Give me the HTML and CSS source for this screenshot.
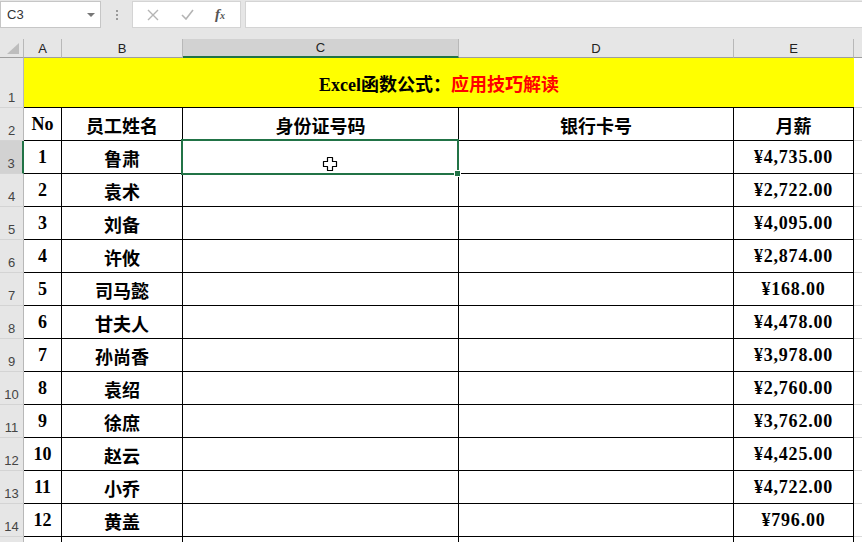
FILE: index.html
```html
<!DOCTYPE html>
<html>
<head>
<meta charset='utf-8'>
<title>Excel函数公式</title>
<link rel="stylesheet" href="styles.css">
</head>
<body>

<div class=topbar>
	<div class=namebox><span>C3</span><span class=drop></span></div>
	<div class=grip><i></i><i></i><i></i></div>
	<div class=fbtns>
		<svg class=btn width=12 height=12 viewBox="0 0 12 12"><path d="M1 1 L11 11 M11 1 L1 11" stroke="#b4b4b4" stroke-width="1.4" fill="none"/></svg>
		<svg class=btn width=13 height=11 viewBox="0 0 13 11"><path d="M1 6 L5 10 L12 1" stroke="#b4b4b4" stroke-width="1.6" fill="none"/></svg>
		<span class=fx>f<small>x</small></span>
	</div>
	<div class=finput></div>
</div>

<div class=sheet>
	<!-- column headers -->
	<div class="ch corner"><svg width=13 height=12 viewBox="0 0 13 12"><polygon points="12,0 12,11 0,11" fill="#bdbdbd"/></svg></div>
	<div class=ch>A</div>
	<div class=ch>B</div>
	<div class="ch sel">C</div>
	<div class=ch>D</div>
	<div class=ch>E</div>
	<div class="ch last"></div>

	<!-- row 1 -->
	<div class=rh>1</div>
	<div class=title>Excel函数公式：<span class=red>应用技巧解读</span></div>
	<div class=f></div>

	<!-- row 2 -->
	<div class=rh>2</div>
	<div class=c>No</div>
	<div class=c>员工姓名</div>
	<div class=c>身份证号码</div>
	<div class=c>银行卡号</div>
	<div class=c>月薪</div>
	<div class=f></div>

	<div class="rh rsel">3</div>
	<div class=c>1</div>
	<div class=c>鲁肃</div>
	<div class="c active"><svg class=cursor width=16 height=16 viewBox="0 0 16 16"><path d="M5.5 1.5 H10.5 V5.5 H14.5 V10.5 H10.5 V14.5 H5.5 V10.5 H1.5 V5.5 H5.5 Z" fill="#fff" stroke="#000" stroke-width="1.2" stroke-linejoin="round"/></svg></div>
	<div class=c></div>
	<div class="c m">¥4,735.00</div>
	<div class=f></div>

	<div class=rh>4</div>
	<div class=c>2</div>
	<div class=c>袁术</div>
	<div class=c></div>
	<div class=c></div>
	<div class="c m">¥2,722.00</div>
	<div class=f></div>

	<div class=rh>5</div>
	<div class=c>3</div>
	<div class=c>刘备</div>
	<div class=c></div>
	<div class=c></div>
	<div class="c m">¥4,095.00</div>
	<div class=f></div>

	<div class=rh>6</div>
	<div class=c>4</div>
	<div class=c>许攸</div>
	<div class=c></div>
	<div class=c></div>
	<div class="c m">¥2,874.00</div>
	<div class=f></div>

	<div class=rh>7</div>
	<div class=c>5</div>
	<div class=c>司马懿</div>
	<div class=c></div>
	<div class=c></div>
	<div class="c m">¥168.00</div>
	<div class=f></div>

	<div class=rh>8</div>
	<div class=c>6</div>
	<div class=c>甘夫人</div>
	<div class=c></div>
	<div class=c></div>
	<div class="c m">¥4,478.00</div>
	<div class=f></div>

	<div class=rh>9</div>
	<div class=c>7</div>
	<div class=c>孙尚香</div>
	<div class=c></div>
	<div class=c></div>
	<div class="c m">¥3,978.00</div>
	<div class=f></div>

	<div class=rh>10</div>
	<div class=c>8</div>
	<div class=c>袁绍</div>
	<div class=c></div>
	<div class=c></div>
	<div class="c m">¥2,760.00</div>
	<div class=f></div>

	<div class=rh>11</div>
	<div class=c>9</div>
	<div class=c>徐庶</div>
	<div class=c></div>
	<div class=c></div>
	<div class="c m">¥3,762.00</div>
	<div class=f></div>

	<div class=rh>12</div>
	<div class=c>10</div>
	<div class=c>赵云</div>
	<div class=c></div>
	<div class=c></div>
	<div class="c m">¥4,425.00</div>
	<div class=f></div>

	<div class=rh>13</div>
	<div class=c>11</div>
	<div class=c>小乔</div>
	<div class=c></div>
	<div class=c></div>
	<div class="c m">¥4,722.00</div>
	<div class=f></div>

	<div class=rh>14</div>
	<div class=c>12</div>
	<div class=c>黄盖</div>
	<div class=c></div>
	<div class=c></div>
	<div class="c m">¥796.00</div>
	<div class=f></div>

	<!-- row 15, only its top edge shows -->
	<div class=rh></div>
	<div class=c></div>
	<div class=c></div>
	<div class=c></div>
	<div class=c></div>
	<div class=c></div>
	<div class=f></div>
</div>

</body>
</html>
```

FILE: styles.css
```css
body, html {
	margin: 0;
	height: 542px;
	overflow: hidden;
	background: #fff;
}

/* formula bar */
.topbar {
	display: flex;
	align-items: flex-start;
	height: 39px;
	padding-top: 1px;
	box-sizing: border-box;
	background: #e6e6e6;
	font-family: "Liberation Sans", "DejaVu Sans", sans-serif;
}
.namebox {
	position: relative;
	width: 101px;
	height: 27px;
	box-sizing: border-box;
	border: 1px solid #c6c6c6;
	background: #fff;
	font-size: 13px;
	color: #333;
	line-height: 25px;
	padding-left: 6px;
}
.drop {
	position: absolute;
	right: 5px;
	top: 11px;
	border-left: 4px solid transparent;
	border-right: 4px solid transparent;
	border-top: 4px solid #777;
}
.grip {
	width: 31px;
	height: 27px;
	display: flex;
	flex-direction: column;
	align-items: center;
	justify-content: center;
	gap: 2px;
}
.grip i {
	width: 2px;
	height: 2px;
	background: #9a9a9a;
}
.fbtns {
	display: flex;
	align-items: center;
	width: 109px;
	height: 27px;
	box-sizing: border-box;
	border: 1px solid #d4d4d4;
	background: #fff;
	padding-left: 14px;
	gap: 22px;
}
.btn {
	display: block;
}
.fx {
	font-family: "Liberation Serif", serif;
	font-style: italic;
	font-weight: bold;
	font-size: 15px;
	color: #555;
	margin-left: -1px;
}
.fx small {
	font-size: 10px;
}
.finput {
	flex: 1;
	height: 27px;
	margin-left: 4px;
	box-sizing: border-box;
	border: 1px solid #d4d4d4;
	border-right: none;
	background: #fff;
}

/* sheet */
.sheet {
	display: grid;
	grid-template-columns: 24px 38px 121px 276px 275px 120px 1fr;
	grid-template-rows: 19px 50px repeat(14, 33px);
}
.sheet > div {
	box-sizing: border-box;
}

.ch {
	background: #e6e6e6;
	border-right: 1px solid #b8b8b8;
	border-bottom: 1px solid #9e9e9e;
	font-family: "Liberation Sans", "DejaVu Sans", sans-serif;
	font-size: 13px;
	color: #222;
	display: flex;
	align-items: center;
	justify-content: center;
}
.ch.last {
	border-right: none;
}
.ch.sel {
	background: #d2d2d2;
	border-bottom: 2px solid #217346;
}
.corner {
	align-items: flex-end;
	justify-content: flex-end;
	padding: 0 3px 2px 0;
}
.corner svg {
	display: block;
}

.rh {
	background: #e6e6e6;
	border-right: 1px solid #b8b8b8;
	border-bottom: 1px solid #d4d4d4;
	font-family: "Liberation Sans", "DejaVu Sans", sans-serif;
	font-size: 13px;
	color: #444;
	display: flex;
	align-items: flex-end;
	justify-content: center;
	padding-bottom: 2px;
}
.rh.rsel {
	background: #d2d2d2;
	border-right: 2px solid #217346;
}

.title {
	grid-column: span 5;
	background: #ff0;
	border-bottom: 1px solid #000;
	display: flex;
	align-items: center;
	justify-content: center;
	font-family: "Liberation Serif", "Noto Sans CJK SC", serif;
	font-weight: bold;
	font-size: 18px;
	color: #000;
}
.red {
	color: #f00;
}

.c {
	border-right: 1px solid #000;
	border-bottom: 1px solid #000;
	display: flex;
	align-items: center;
	justify-content: center;
	padding-top: 1px;
	font-family: "Liberation Serif", "Noto Sans CJK SC", serif;
	font-weight: bold;
	font-size: 18px;
	color: #000;
}
.c.m {
	letter-spacing: 0.8px;
}

.f {
	border-bottom: 1px solid #d9d9d9;
}

.active {
	position: relative;
}
.active::after {
	content: '';
	position: absolute;
	left: -2px;
	top: -2px;
	right: -1px;
	bottom: -2px;
	border: 2px solid #217346;
}
.active::before {
	content: '';
	position: absolute;
	right: -3px;
	bottom: -4px;
	width: 5px;
	height: 5px;
	background: #217346;
	border: 1px solid #fff;
	z-index: 1;
}
.cursor {
	position: absolute;
	left: 139px;
	top: 15px;
	z-index: 2;
}
```
